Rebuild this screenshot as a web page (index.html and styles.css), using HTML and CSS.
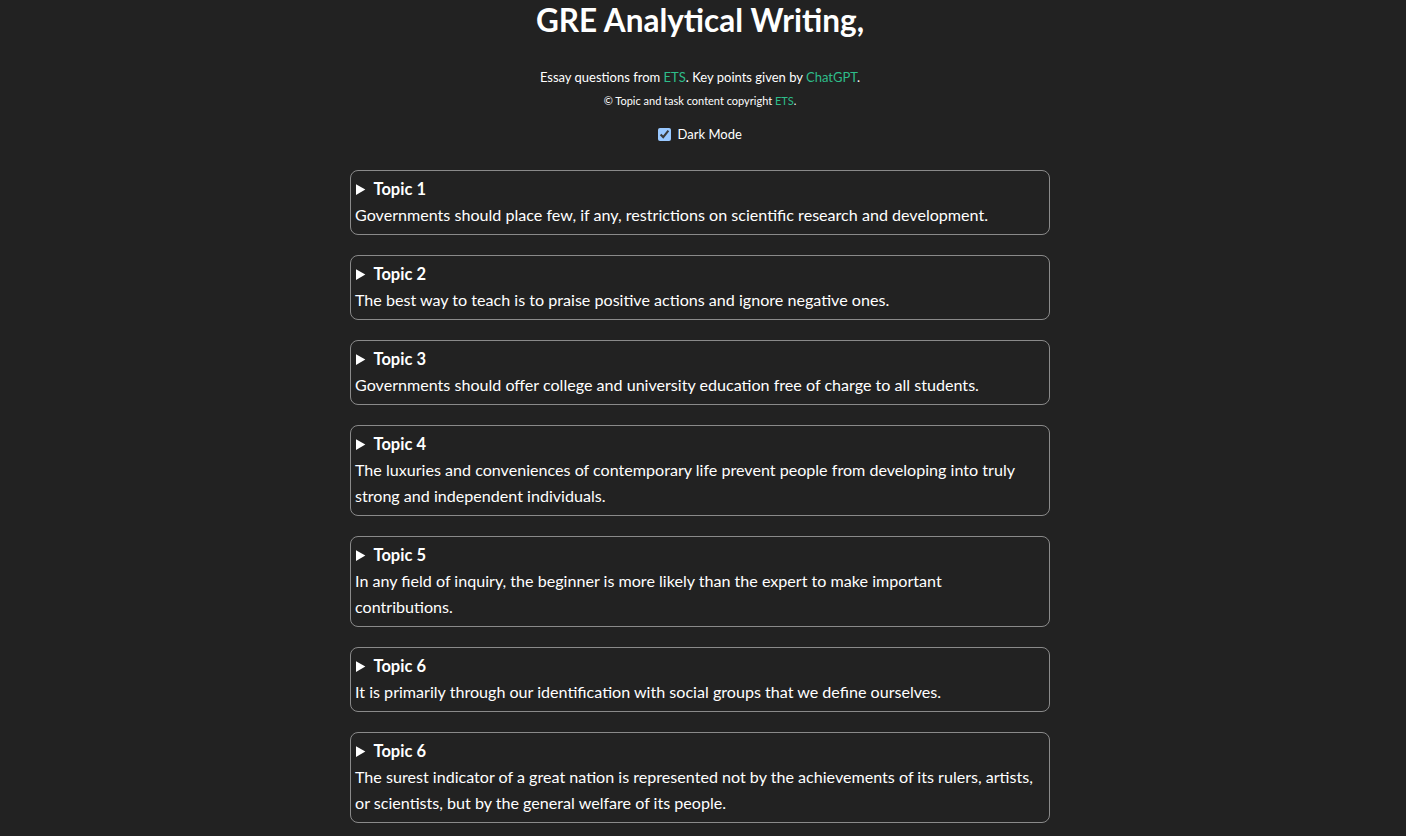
FILE: index.html
```html
<!DOCTYPE html>
<html lang="en">
<head>
<meta charset="utf-8">
<title>GRE Analytical Writing</title>
<link rel="stylesheet" href="styles.css">
</head>
<body>
<header class="intro">
  <h1 class="title">GRE Analytical Writing,</h1>
  <p class="credits">Essay questions from <a href="#" class="link">ETS</a>. Key points given by <a href="#" class="link">ChatGPT</a>.</p>
  <p class="copyright">© Topic and task content copyright <a href="#" class="link">ETS</a>.</p>
  <label class="toggle"><input type="checkbox" class="toggle-box" checked> Dark Mode</label>
</header>
<main class="topics">
  <section class="topic">
    <details class="topic-details"><summary class="topic-head">Topic 1</summary></details>
    <p class="topic-text">Governments should place few, if any, restrictions on scientific research and development.</p>
  </section>
  <section class="topic">
    <details class="topic-details"><summary class="topic-head">Topic 2</summary></details>
    <p class="topic-text">The best way to teach is to praise positive actions and ignore negative ones.</p>
  </section>
  <section class="topic">
    <details class="topic-details"><summary class="topic-head">Topic 3</summary></details>
    <p class="topic-text">Governments should offer college and university education free of charge to all students.</p>
  </section>
  <section class="topic">
    <details class="topic-details"><summary class="topic-head">Topic 4</summary></details>
    <p class="topic-text">The luxuries and conveniences of contemporary life prevent people from developing into truly strong and independent individuals.</p>
  </section>
  <section class="topic">
    <details class="topic-details"><summary class="topic-head">Topic 5</summary></details>
    <p class="topic-text">In any field of inquiry, the beginner is more likely than the expert to make important contributions.</p>
  </section>
  <section class="topic">
    <details class="topic-details"><summary class="topic-head">Topic 6</summary></details>
    <p class="topic-text">It is primarily through our identification with social groups that we define ourselves.</p>
  </section>
  <section class="topic">
    <details class="topic-details"><summary class="topic-head">Topic 6</summary></details>
    <p class="topic-text">The surest indicator of a great nation is represented not by the achievements of its rulers, artists, or scientists, but by the general welfare of its people.</p>
  </section>
</main>
</body>
</html>
```
FILE: styles.css
```css
html, body { margin: 0; padding: 0; }
body {
  background: #222222;
  color: #ffffff;
  font-family: Lato, "Noto Sans", sans-serif;
  padding-right: 6px;
  padding-bottom: 20px;
}
.intro { text-align: center; }
.title { font-size: 31.5px; margin: 0; line-height: 40px; }
.credits { font-size: 13px; margin: 29px 0 0; line-height: 16px; }
.copyright { font-size: 11px; margin: 9px 0 0; line-height: 14px; }
.link { color: #2ebd8a; text-decoration: none; }
.toggle { display: inline-block; margin-top: 18px; font-size: 13px; }
.toggle-box { color-scheme: dark; margin: 0 3px 0 0; vertical-align: -2px; }
.topics { width: 700px; margin: 28px auto 0; display: flex; flex-direction: column; gap: 20px; }
.topic { border: 1px solid #8a8a8a; border-radius: 8px; padding: 5px 12px 6px 4px; font-size: 16.1px; line-height: 26px; }
.topic-head { font-weight: bold; line-height: 26px; padding-left: 1px; font-size: 16.5px; }
.topic-text { margin: 0; }
```
